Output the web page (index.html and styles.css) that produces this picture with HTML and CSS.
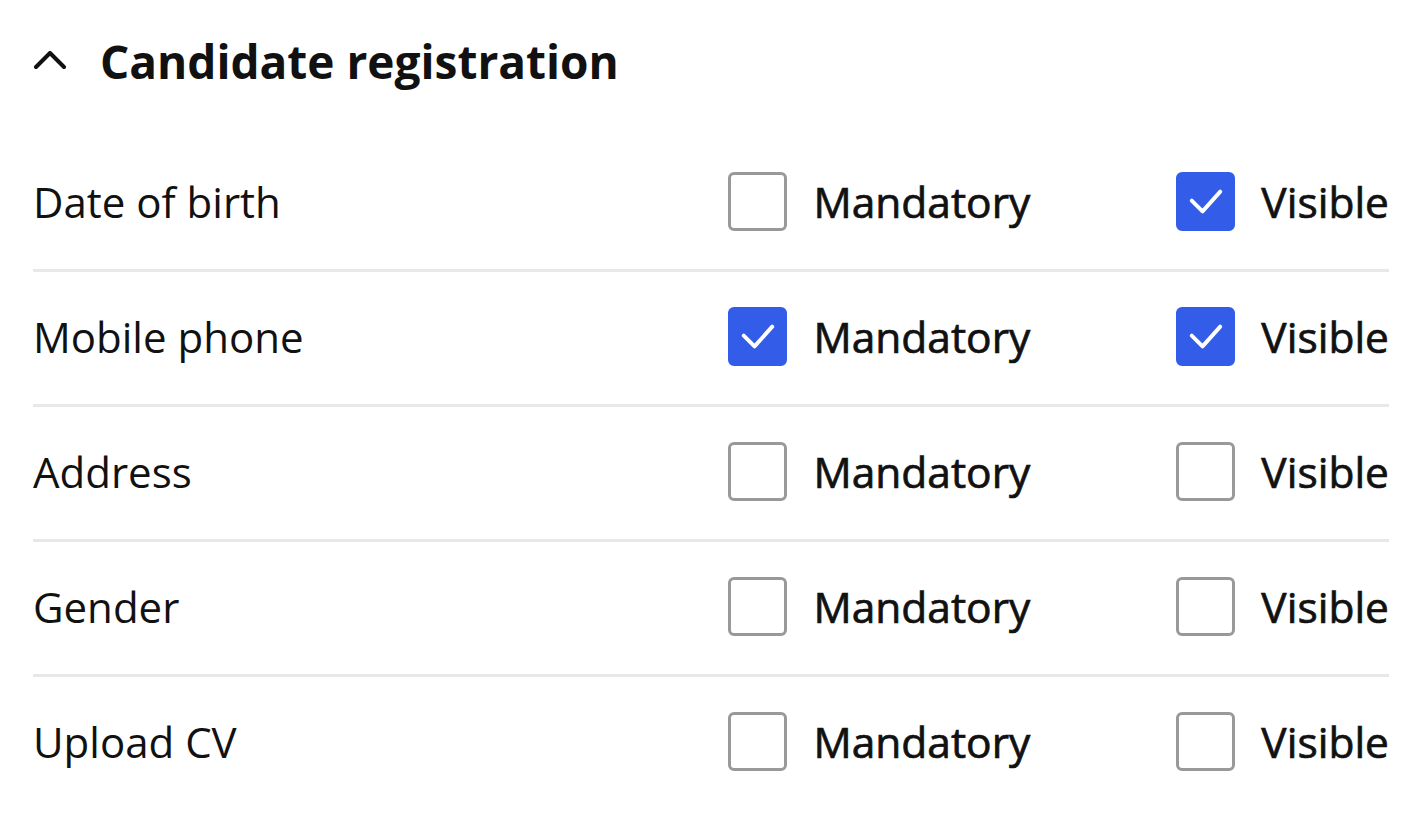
FILE: index.html
```html
<!DOCTYPE html>
<html>
<head>
<meta charset="utf-8">
<link rel="stylesheet" href="styles.css">
</head>
<body>
<section class="panel">
  <header class="panel-head">
    <svg class="chevron" viewBox="0 0 34 20" width="34" height="20"><path d="M3 16 L17 2 L31 16" fill="none" stroke="#111" stroke-width="4" stroke-linecap="round" stroke-linejoin="round"/></svg>
    <h2 class="title">Candidate registration</h2>
  </header>
  <div class="rows">
    <div class="row">
      <span class="label">Date of birth</span>
      <div class="opts">
        <label class="opt"><span class="box"></span><span class="opt-text">Mandatory</span></label>
        <label class="opt"><span class="box on"><svg viewBox="0 0 60 60"><path d="M16 29 L27 40 L45 20" fill="none" stroke="#fff" stroke-width="4" stroke-linecap="round" stroke-linejoin="round"/></svg></span><span class="opt-text">Visible</span></label>
      </div>
    </div>
    <div class="row">
      <span class="label">Mobile phone</span>
      <div class="opts">
        <label class="opt"><span class="box on"><svg viewBox="0 0 60 60"><path d="M16 29 L27 40 L45 20" fill="none" stroke="#fff" stroke-width="4" stroke-linecap="round" stroke-linejoin="round"/></svg></span><span class="opt-text">Mandatory</span></label>
        <label class="opt"><span class="box on"><svg viewBox="0 0 60 60"><path d="M16 29 L27 40 L45 20" fill="none" stroke="#fff" stroke-width="4" stroke-linecap="round" stroke-linejoin="round"/></svg></span><span class="opt-text">Visible</span></label>
      </div>
    </div>
    <div class="row">
      <span class="label">Address</span>
      <div class="opts">
        <label class="opt"><span class="box"></span><span class="opt-text">Mandatory</span></label>
        <label class="opt"><span class="box"></span><span class="opt-text">Visible</span></label>
      </div>
    </div>
    <div class="row">
      <span class="label">Gender</span>
      <div class="opts">
        <label class="opt"><span class="box"></span><span class="opt-text">Mandatory</span></label>
        <label class="opt"><span class="box"></span><span class="opt-text">Visible</span></label>
      </div>
    </div>
    <div class="row">
      <span class="label">Upload CV</span>
      <div class="opts">
        <label class="opt"><span class="box"></span><span class="opt-text">Mandatory</span></label>
        <label class="opt"><span class="box"></span><span class="opt-text">Visible</span></label>
      </div>
    </div>
  </div>
</section>
</body>
</html>
```
FILE: styles.css
```css
html, body {
  margin: 0;
  padding: 0;
  background: #fff;
}
body {
  font-family: "Open Sans", "Noto Sans", sans-serif;
  color: #111;
}
.panel {
  padding: 0 31px 0 33px;
}
.panel-head {
  display: flex;
  align-items: center;
  height: 137px;
  padding-bottom: 16px;
  box-sizing: border-box;
}
.chevron {
  margin-left: 0;
  margin-right: 33px;
  display: block;
}
.title {
  margin: 0;
  font-size: 46px;
  font-weight: 700;
  letter-spacing: 0;
}
.rows {
  display: flex;
  flex-direction: column;
}
.row {
  display: flex;
  align-items: center;
  height: 129px;
  padding-bottom: 3px;
  border-bottom: 3px solid #e8e8e8;
}
.row:last-child {
  border-bottom: none;
}
.label {
  flex: 1;
  font-size: 42px;
  font-weight: 400;
}
.opts {
  display: flex;
  gap: 146px;
}
.opt {
  display: flex;
  align-items: center;
  gap: 26px;
}
.box {
  width: 59px;
  height: 59px;
  box-sizing: border-box;
  border: 3px solid #999;
  border-radius: 6px;
  display: flex;
  align-items: center;
  justify-content: center;
}
.box.on {
  background: #335ce8;
  border-color: #335ce8;
}
.box svg {
  width: 59px;
  height: 59px;
  flex: none;
}
.opt-text {
  font-size: 42.5px;
  font-weight: 400;
  -webkit-text-stroke: 0.7px currentColor;
}
```
